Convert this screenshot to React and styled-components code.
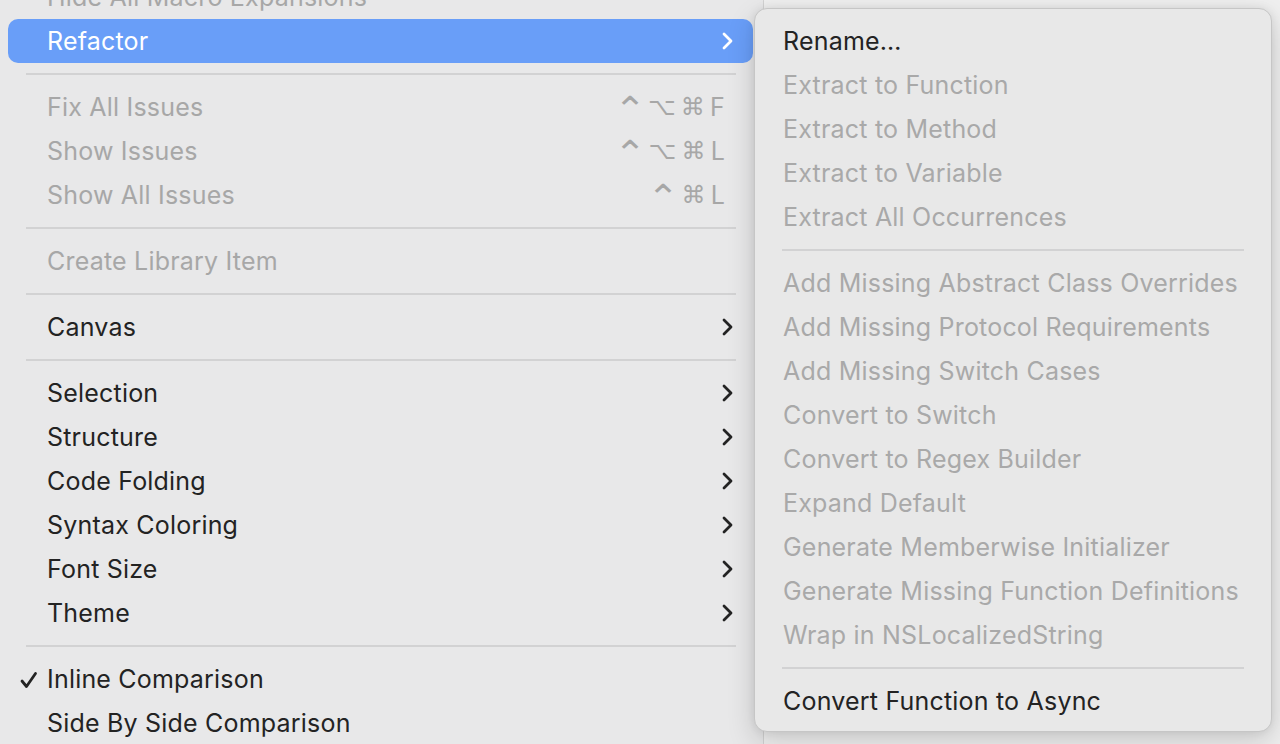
import React from 'react'
import styled, { createGlobalStyle } from 'styled-components'

const Global = createGlobalStyle`
  html, body {
    margin: 0;
    padding: 0;
    height: 100%;
    overflow: hidden;
    background: #efefef;
  }
  body {
    font-family: Inter, "Noto Sans", "DejaVu Sans", sans-serif;
    -webkit-font-smoothing: antialiased;
  }
`;

const Screen = styled.div`
  position: relative;
  width: 1280px;
  height: 744px;
  overflow: hidden;
  display: flex;
  align-items: flex-start;
`;

const MainMenu = styled.div`
  width: 764px;
  height: 800px;
  margin-top: -25px;
  background: #e8e8e9;
  border-right: 1px solid #d2d2d2;
  padding: 0 10px 0 8px;
  box-sizing: border-box;
  display: flex;
  flex-direction: column;
`;

const Row = styled.div`
  height: 44px;
  flex: none;
  display: flex;
  align-items: center;
  border-radius: 10px;
  padding: 0 18px 0 39px;
  position: relative;
  font-size: 25px;
  letter-spacing: 0.2px;
  color: ${(p) => (p.$active ? '#ffffff' : p.$disabled ? '#a7a7a7' : '#232323')};
  background: ${(p) => (p.$active ? '#699ef8' : 'transparent')};
`;

const Label = styled.span`
  flex: 1;
  white-space: nowrap;
`;

const Sep = styled.div`
  height: 22px;
  flex: none;
  display: flex;
  align-items: center;
  padding: 0 ${(p) => p.$right || 17}px 0 ${(p) => p.$left || 18}px;
  &::after {
    content: '';
    flex: 1;
    height: 2px;
    background: #d2d2d3;
  }
`;

const Shortcut = styled.span`
  display: flex;
  align-items: center;
  gap: 5px;
  margin-right: 10px;
  color: #a7a7a7;
`;

const Key = styled.span`
  display: inline-block;
  font-family: ${(p) => (p.$letter ? 'Inter, sans-serif' : '"DejaVu Sans", sans-serif')};
  font-size: ${(p) => (p.$letter ? '25px' : '24px')};
  transform: ${(p) => (p.$caret ? 'scale(1.6, 1.5) translateY(2px)' : 'none')};
  margin: ${(p) => (p.$caret ? '0 3px 0 0' : '0')};
`;

const Check = styled.svg`
  position: absolute;
  left: 12px;
  top: 14px;
`;

const SubMenu = styled.div`
  position: absolute;
  left: 754px;
  top: 8px;
  width: 518px;
  height: 724px;
  box-sizing: border-box;
  background: #e8e8e8;
  border: 1px solid #c6c6c6;
  border-radius: 13px;
  box-shadow: 0 10px 28px rgba(0, 0, 0, 0.16), 0 0 10px rgba(0, 0, 0, 0.08);
  padding-top: 10px;
  display: flex;
  flex-direction: column;
`;

const SubRow = styled.div`
  height: 44px;
  flex: none;
  display: flex;
  align-items: center;
  padding-left: 28px;
  font-size: 25px;
  letter-spacing: 0.2px;
  white-space: nowrap;
  color: ${(p) => (p.$disabled ? '#a9a9a9' : '#232323')};
`;

const Chevron = ({ color = '#232323' }) => (
  <svg width="14" height="20" viewBox="0 0 14 20">
    <polyline points="3,3 10,10 3,17" fill="none" stroke={color} strokeWidth="2.8" strokeLinecap="round" strokeLinejoin="round" />
  </svg>
);

const keys = (list) => (
  <Shortcut>
    {list.map((k, i) => (
      <Key key={i} $letter={/^[A-Z]$/.test(k)} $caret={k === '⌃'}>{k}</Key>
    ))}
  </Shortcut>
);

export default function App() {
  return (
    <>
      <Global />
      <Screen>
        <MainMenu>
          <Row $disabled>
            <Label>Hide All Macro Expansions</Label>
          </Row>
          <Row $active>
            <Label>Refactor</Label>
            <Chevron color="#ffffff" />
          </Row>
          <Sep />
          <Row $disabled>
            <Label>Fix All Issues</Label>
            {keys(['⌃', '⌥', '⌘', 'F'])}
          </Row>
          <Row $disabled>
            <Label>Show Issues</Label>
            {keys(['⌃', '⌥', '⌘', 'L'])}
          </Row>
          <Row $disabled>
            <Label>Show All Issues</Label>
            {keys(['⌃', '⌘', 'L'])}
          </Row>
          <Sep />
          <Row $disabled>
            <Label>Create Library Item</Label>
          </Row>
          <Sep />
          <Row>
            <Label>Canvas</Label>
            <Chevron />
          </Row>
          <Sep />
          {['Selection', 'Structure', 'Code Folding', 'Syntax Coloring', 'Font Size', 'Theme'].map((t) => (
            <Row key={t}>
              <Label>{t}</Label>
              <Chevron />
            </Row>
          ))}
          <Sep />
          <Row>
            <Check width="18" height="18" viewBox="0 0 18 18">
              <polyline points="2,10 6.5,15.5 15.5,2.5" fill="none" stroke="#232323" strokeWidth="2.8" strokeLinecap="round" strokeLinejoin="round" />
            </Check>
            <Label>Inline Comparison</Label>
          </Row>
          <Row>
            <Label>Side By Side Comparison</Label>
          </Row>
        </MainMenu>

        <SubMenu>
          <SubRow>Rename…</SubRow>
          <SubRow $disabled>Extract to Function</SubRow>
          <SubRow $disabled>Extract to Method</SubRow>
          <SubRow $disabled>Extract to Variable</SubRow>
          <SubRow $disabled>Extract All Occurrences</SubRow>
          <Sep $left={27} $right={27} />
          <SubRow $disabled>Add Missing Abstract Class Overrides</SubRow>
          <SubRow $disabled>Add Missing Protocol Requirements</SubRow>
          <SubRow $disabled>Add Missing Switch Cases</SubRow>
          <SubRow $disabled>Convert to Switch</SubRow>
          <SubRow $disabled>Convert to Regex Builder</SubRow>
          <SubRow $disabled>Expand Default</SubRow>
          <SubRow $disabled>Generate Memberwise Initializer</SubRow>
          <SubRow $disabled>Generate Missing Function Definitions</SubRow>
          <SubRow $disabled>Wrap in NSLocalizedString</SubRow>
          <Sep $left={27} $right={27} />
          <SubRow>Convert Function to Async</SubRow>
        </SubMenu>
      </Screen>
    </>
  )
}
